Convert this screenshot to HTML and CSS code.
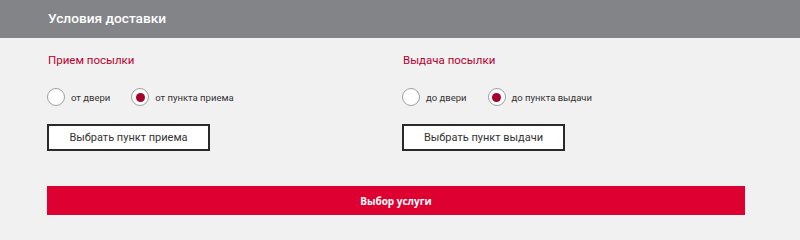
FILE: index.html
```html
<!DOCTYPE html>
<html lang="ru">
<head>
  <meta charset="UTF-8" />
  <title>Условия доставки</title>
  <link rel="stylesheet" href="styles.css">
</head>
<body>

  <div class="header">
    <h1>Условия доставки</h1>
  </div>

  <div class="content">
    <div class="columns">
      <div class="column">
        <h2>Прием посылки</h2>
        <div class="radios">
          <label class="radio"><span class="dot"></span>от двери</label>
          <label class="radio checked"><span class="dot"></span>от пункта приема</label>
        </div>
        <button class="outline">Выбрать пункт приема</button>
      </div>

      <div class="column">
        <h2>Выдача посылки</h2>
        <div class="radios">
          <label class="radio"><span class="dot"></span>до двери</label>
          <label class="radio checked"><span class="dot"></span>до пункта выдачи</label>
        </div>
        <button class="outline">Выбрать пункт выдачи</button>
      </div>
    </div>

    <button class="primary">Выбор услуги</button>
  </div>

</body>
</html>
```

FILE: styles.css
```css
body {
  margin: 0;
  background-color: #f1f1f1;
  font-family: Roboto, Arial, sans-serif;
  color: #333;
}

.header {
  background-color: #838488;
  height: 38px;
  padding: 0 48px;
  display: flex;
  align-items: center;
}

.header h1 {
  margin: 0 0 2px;
  font-size: 13.7px;
  font-weight: 500;
  color: #fff;
}

.content {
  padding: 14px 55px 0 47px;
}

.columns {
  display: grid;
  grid-template-columns: 355px 1fr;
}

.column h2 {
  margin: 0 0 0 1px;
  font-size: 11.5px;
  font-weight: normal;
  color: #b8002f;
  line-height: 17px;
}

.radios {
  display: flex;
  gap: 21px;
  margin-top: 19px;
}

.radio {
  display: flex;
  align-items: center;
  gap: 6px;
  font-size: 9.5px;
  color: #333;
  cursor: pointer;
}

.dot {
  width: 16px;
  height: 16px;
  border: 1px solid #a0a0a0;
  border-radius: 50%;
  background-color: #fff;
  display: flex;
  align-items: center;
  justify-content: center;
}

.radio.checked .dot::after {
  content: "";
  width: 9px;
  height: 9px;
  border-radius: 50%;
  background-color: #a8002c;
}

.outline {
  margin-top: 18px;
  width: 163px;
  height: 27px;
  background-color: #fff;
  border: 2px solid #2a2a2a;
  font-family: Roboto, Arial, sans-serif;
  font-size: 11px;
  color: #333;
  cursor: pointer;
}

.primary {
  display: block;
  width: 698px;
  height: 29px;
  margin-top: 35px;
  background-color: #dd0031;
  color: #fff;
  border: none;
  font-family: "Open Sans", Arial, sans-serif;
  font-size: 10px;
  font-weight: bold;
  cursor: pointer;
}
```
